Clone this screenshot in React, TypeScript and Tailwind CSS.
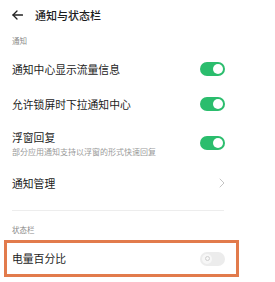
import React from "react";

const font = { fontFamily: '"Noto Sans CJK SC", "Noto Sans", sans-serif' };

function Toggle({ on }: { on: boolean }) {
  if (on) {
    return (
      <div className="relative w-[25px] h-[14px] rounded-full bg-[#2bbd6d] shrink-0">
        <div className="absolute right-[2px] top-[2px] w-[10px] h-[10px] rounded-full bg-white" />
      </div>
    );
  }
  return (
    <div className="relative w-[25px] h-[14px] rounded-full bg-[#ececec] shrink-0">
      <div className="absolute left-[2px] top-[2px] w-[10px] h-[10px] rounded-full bg-[#f7f7f7] flex items-center justify-center">
        <div className="w-[5px] h-[5px] rounded-full border border-[#cfcfcf]" />
      </div>
    </div>
  );
}

function Row({ title, sub, on }: { title: string; sub?: string; on: boolean }) {
  return (
    <div className="flex items-center justify-between h-full pl-[12px] pr-[50px]">
      <div className="flex flex-col gap-[2px]">
        <span className="text-[10.8px] leading-[14px] text-[#1c1c1c]">{title}</span>
        {sub && <span className="text-[8px] leading-[11px] text-[#9a9a9a]">{sub}</span>}
      </div>
      <Toggle on={on} />
    </div>
  );
}

export default function App() {
  return (
    <div className="w-[275px] h-[282px] bg-white overflow-hidden" style={font}>
      {/* header */}
      <div className="h-[30px] flex items-center pl-[12px]">
        <svg width="11" height="10" viewBox="0 0 11 10" fill="none" stroke="#222" strokeWidth="1.3" strokeLinecap="round" strokeLinejoin="round">
          <path d="M10.5 5H1" />
          <path d="M5 1L1 5l4 4" />
        </svg>
        <span className="ml-[12px] text-[11px] font-medium text-[#1c1c1c]">通知与状态栏</span>
      </div>

      <div className="h-[22px] flex items-center pl-[12px] text-[7.5px] text-[#8a8a8a]">通知</div>

      <div className="h-[34px]">
        <Row title="通知中心显示流量信息" on />
      </div>
      <div className="h-[35px]">
        <Row title="允许锁屏时下拉通知中心" on />
      </div>
      <div className="h-[44px]">
        <Row title="浮窗回复" sub="部分应用通知支持以浮窗的形式快速回复" on />
      </div>
      <div className="h-[36px] flex items-center justify-between pl-[12px] pr-[50px]">
        <span className="text-[10.8px] text-[#1c1c1c]">通知管理</span>
        <svg width="6" height="10" viewBox="0 0 6 10" fill="none" stroke="#c4c4c4" strokeWidth="1" strokeLinecap="round" strokeLinejoin="round">
          <path d="M1 1l4 4-4 4" />
        </svg>
      </div>

      <div className="mt-[9px] ml-[12px] w-[212px] h-px bg-[#ededed]" />

      <div className="h-[29px] pt-[9px] flex items-center pl-[12px] text-[7.5px] text-[#8a8a8a]">状态栏</div>

      <div className="ml-[4px] w-[235px] h-[37px] border-[3px] border-[#e27b4c] flex items-center justify-between pl-[5px] pr-[11px]">
        <span className="text-[10.8px] text-[#1c1c1c]">电量百分比</span>
        <Toggle on={false} />
      </div>
    </div>
  );
}
